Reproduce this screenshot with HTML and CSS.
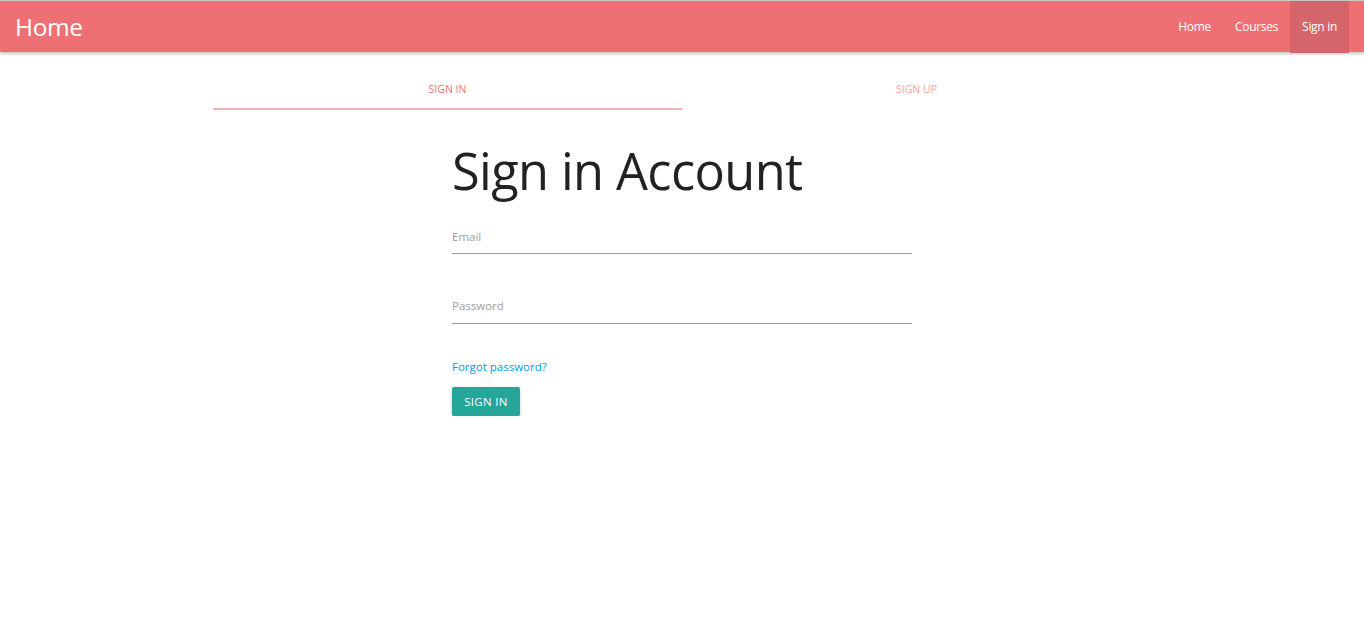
FILE: index.html
```html
<!DOCTYPE html>
<html>
<head>
<meta charset="utf-8">
<link rel="stylesheet" href="styles.css">
</head>
<body>
<nav class="navbar">
  <a class="brand" href="#">Home</a>
  <ul class="nav-links">
    <li><a href="#">Home</a></li>
    <li><a href="#">Courses</a></li>
    <li class="active"><a href="#">Sign in</a></li>
  </ul>
</nav>
<div class="tabs-wrap">
  <ul class="tabs">
    <li class="tab active">Sign in</li>
    <li class="tab">Sign up</li>
  </ul>
</div>
<main class="form-wrap">
  <h3 class="title">Sign in Account</h3>
  <div class="field"><label>Email</label></div>
  <div class="field"><label>Password</label></div>
  <a class="forgot" href="#">Forgot password?</a>
  <button class="btn">Sign in</button>
</main>
</body>
</html>
```
FILE: styles.css
```css
html, body { margin: 0; padding: 0; }
body {
  font-family: "Open Sans", "Noto Sans", sans-serif;
  background: #fff;
  color: #222;
}
a { text-decoration: none; }
.navbar {
  height: 51px;
  border-top: 1px solid #c9c9c9;
  background: #ef7074;
  display: flex;
  align-items: stretch;
  justify-content: space-between;
  padding: 0 15px 0 15px;
  box-shadow: 0 2px 3px rgba(0,0,0,0.22);
  position: relative;
}
.brand {
  color: #fff;
  font-size: 24.5px;
  line-height: 52px;
  letter-spacing: -0.4px;
}
.nav-links {
  list-style: none;
  margin: 0;
  padding: 0;
  display: flex;
}
.nav-links a {
  display: block;
  color: #fff;
  font-size: 12px;
  line-height: 52px;
  padding: 0 12px;
  letter-spacing: -0.3px;
}
.nav-links .active a { background: #d6646b; }
.tabs-wrap {
  width: 938px;
  margin: 0 auto 0 213px;
}
.tabs {
  list-style: none;
  margin: 0;
  padding: 0;
  display: flex;
  height: 58px;
}
.tab {
  flex: 1;
  text-align: center;
  text-transform: uppercase;
  font-size: 10.5px;
  color: #f4a3a0;
  padding-top: 30px;
  box-sizing: border-box;
}
.tab.active {
  color: #ef6f70;
  border-bottom: 2px solid #f7b0b3;
}
.form-wrap {
  width: 460px;
  margin: 0 0 0 452px;
}
.title {
  font-weight: 400;
  font-size: 50.5px;
  margin: 31px 0 0 0;
  line-height: 60px;
  letter-spacing: -0.6px;
  color: #222;
}
.field {
  height: 34px;
  border-bottom: 1px solid #9e9e9e;
  box-sizing: border-box;
}
.field:first-of-type { margin-top: 20px; height: 33px; }
.field + .field { margin-top: 36px; }
.field label {
  display: block;
  font-size: 11.5px;
  color: #9e9e9e;
  padding-top: 8px;
}
.forgot {
  display: block;
  color: #039be5;
  font-size: 11.5px;
  margin-top: 35px;
  line-height: 16px;
}
.btn {
  margin-top: 12px;
  background: #26a69a;
  color: #fff;
  border: none;
  border-radius: 2px;
  height: 29px;
  width: 68px;
  padding: 0;
  font-family: inherit;
  font-size: 11.5px;
  text-transform: uppercase;
  letter-spacing: 0.3px;
  box-shadow: 0 2px 2px rgba(0,0,0,0.14), 0 1px 5px rgba(0,0,0,0.12);
}
```
